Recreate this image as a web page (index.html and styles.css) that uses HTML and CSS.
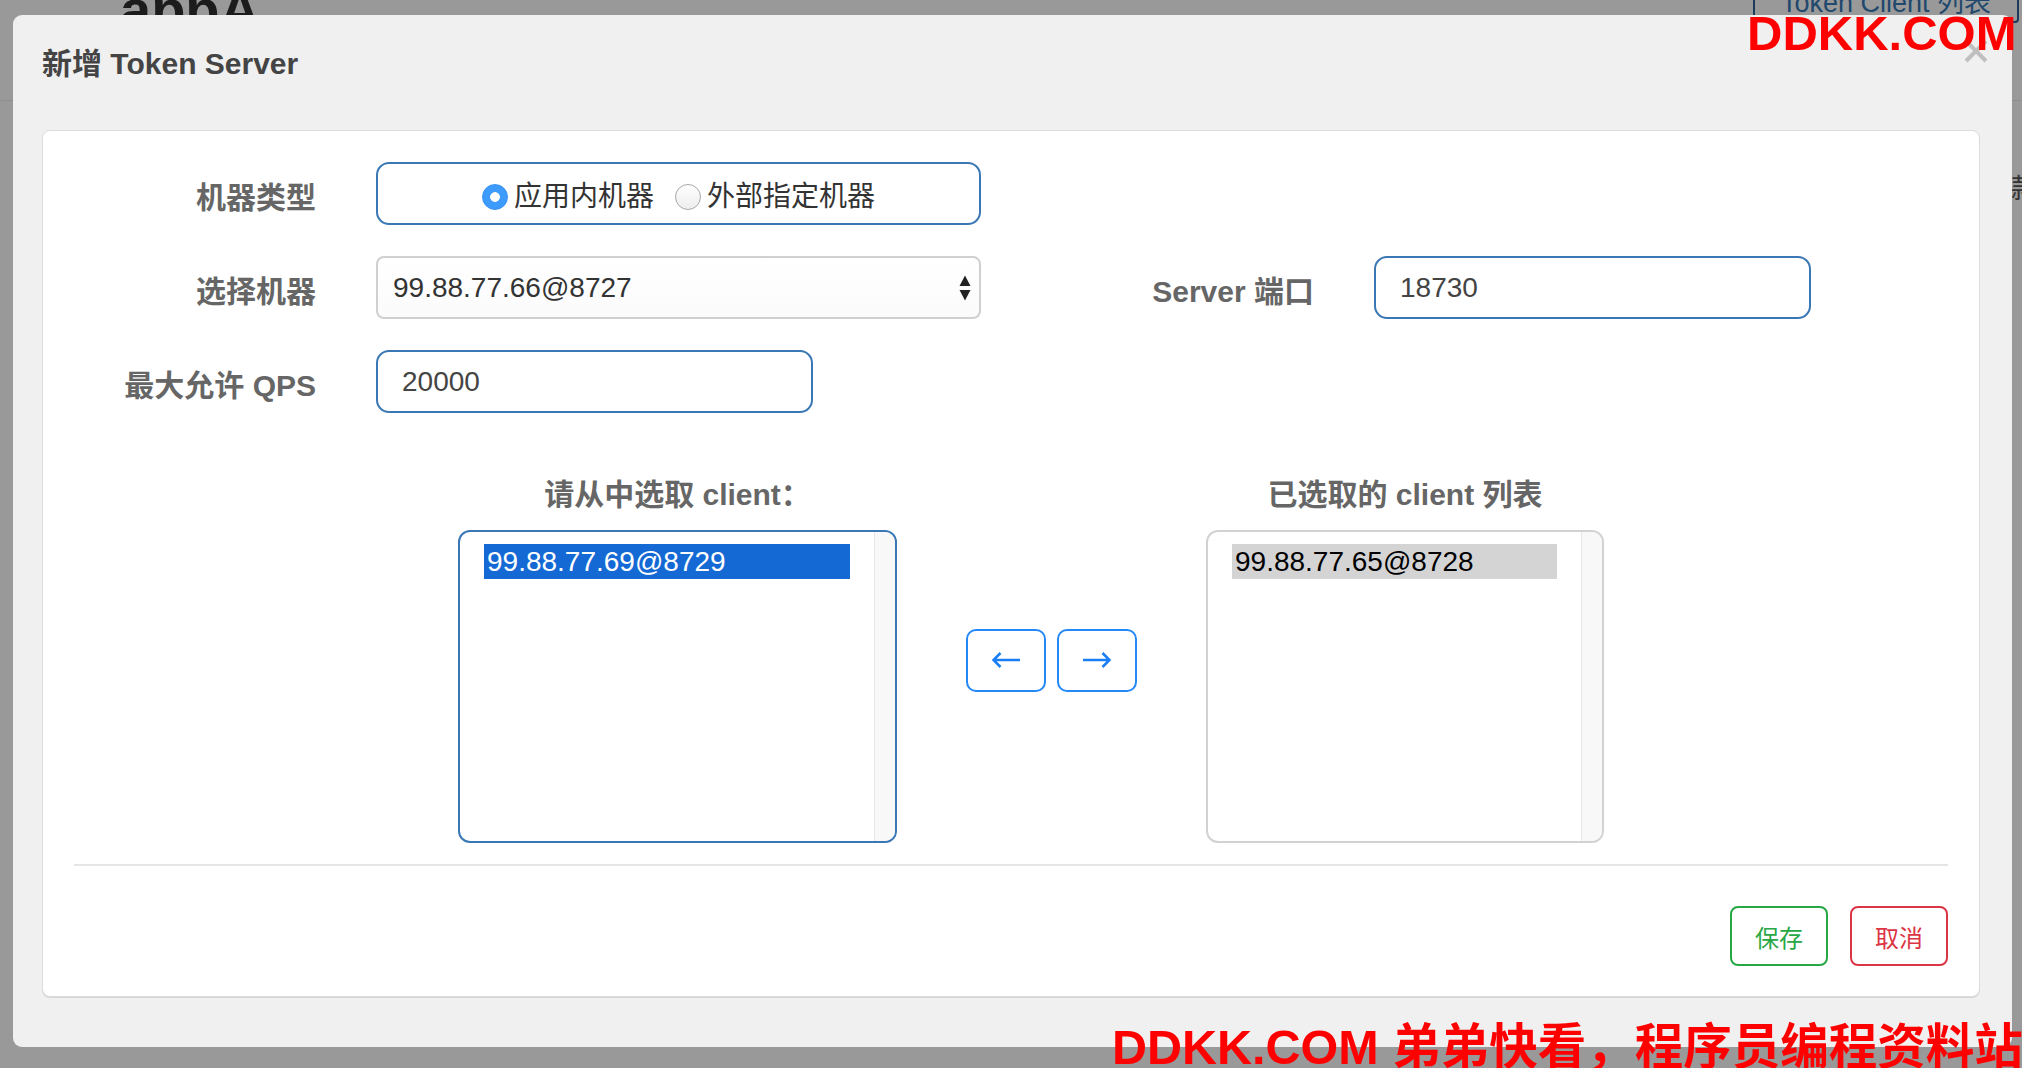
FILE: index.html
```html
<!DOCTYPE html>
<html lang="zh-CN">
<head>
<meta charset="utf-8">
<title>新增 Token Server</title>
<link rel="stylesheet" href="styles.css">
</head>
<body>
<div class="page">
  <div class="page-head">
    <div class="app-name">appA</div>
    <div class="token-client-btn">Token Client 列表</div>
  </div>
  <div class="page-row"><span class="page-tab">新款</span></div>
</div>

<div class="modal">
  <div class="modal-header">
    <h4 class="modal-title">新增 Token Server</h4>
    <button class="close" type="button" aria-label="close">
      <svg width="26" height="26" viewBox="0 0 26 26"><path d="M3 3 L23 23 M23 3 L3 23" stroke="#bfbfbf" stroke-width="4" fill="none"/></svg>
    </button>
  </div>

  <div class="panel">
    <div class="form-grid">
      <div class="lbl r1">机器类型</div>
      <div class="radio-box r1">
        <span class="radio on"></span><span class="radio-text">应用内机器</span>
        <span class="radio off"></span><span class="radio-text">外部指定机器</span>
      </div>

      <div class="lbl r2">选择机器</div>
      <div class="select r2">
        <span class="select-val">99.88.77.66@8727</span>
        <svg class="select-arrows" width="12" height="26" viewBox="0 0 12 26"><path d="M0.5 11 L6 0.5 L11.5 11 Z M0.5 15 L11.5 15 L6 25.5 Z" fill="#222"/></svg>
      </div>
      <div class="lbl r2 c3">Server 端口</div>
      <div class="input r2 c4">18730</div>

      <div class="lbl r3">最大允许 QPS</div>
      <div class="input r3 qps">20000</div>
    </div>

    <div class="transfer">
      <div class="list-col left">
        <div class="list-title">请从中选取 client：</div>
        <div class="listbox active">
          <div class="opts"><div class="opt sel">99.88.77.69@8729</div></div>
          <div class="track"></div>
        </div>
      </div>
      <div class="move-btns">
        <button class="move-btn" type="button">
          <svg width="30" height="18" viewBox="0 0 30 18"><path d="M29 9 H2.5 M9.5 2 L2.5 9 L9.5 16" stroke="#1a7ff5" stroke-width="2.5" fill="none"/></svg>
        </button>
        <button class="move-btn" type="button">
          <svg width="30" height="18" viewBox="0 0 30 18"><path d="M1 9 H27.5 M20.5 2 L27.5 9 L20.5 16" stroke="#1a7ff5" stroke-width="2.5" fill="none"/></svg>
        </button>
      </div>
      <div class="list-col right">
        <div class="list-title">已选取的 client 列表</div>
        <div class="listbox">
          <div class="opts"><div class="opt gray">99.88.77.65@8728</div></div>
          <div class="track"></div>
        </div>
      </div>
    </div>

    <div class="divider"></div>

    <div class="footer">
      <button class="btn btn-save" type="button">保存</button>
      <button class="btn btn-cancel" type="button">取消</button>
    </div>
  </div>
</div>

<div class="wm wm-top">DDKK.COM</div>
<div class="wm wm-bottom">DDKK.COM 弟弟快看，程序员编程资料站</div>
</body>
</html>
```

FILE: styles.css
```css
* { box-sizing: border-box; }

html, body {
  margin: 0;
  padding: 0;
}

body {
  width: 2022px;
  height: 1068px;
  overflow: hidden;
  position: relative;
  background: #999999;
  font-family: "Liberation Sans", "Noto Sans CJK SC", sans-serif;
}

/* underlying page (dimmed by the modal backdrop) */
.page {
  height: 100%;
}

.page-head {
  display: flex;
  justify-content: space-between;
  align-items: flex-start;
  height: 101px;
  border-bottom: 1px solid #8e8e8e;
}

.app-name {
  margin-left: 120px;
  margin-top: -18px;
  font-size: 56px;
  line-height: 56px;
  font-weight: 700;
  color: #1c1c1c;
}

.token-client-btn {
  margin-top: -17px;
  margin-right: 3px;
  padding: 0 26px;
  border: 2px solid #1d3b5a;
  border-radius: 4px;
  font-size: 27px;
  line-height: 36px;
  color: #21486d;
}

.page-row {
  display: flex;
  justify-content: flex-end;
  margin-top: 70px;
  margin-right: -16px;
}

.page-tab {
  font-size: 27px;
  line-height: 36px;
  color: #333;
}

/* modal */
.modal {
  position: absolute;
  left: 13px;
  top: 15px;
  width: 1999px;
  height: 1032px;
  background: #f0f0f0;
  border-radius: 9px;
  padding: 0 32px 50px 29px;
}

.modal-header {
  padding-top: 31px;
  margin-bottom: 48px;
}

.modal-title {
  margin: 0;
  font-size: 30px;
  line-height: 36px;
  font-weight: 700;
  color: #444;
}

.close {
  position: absolute;
  right: 23px;
  top: 23px;
  width: 26px;
  height: 26px;
  padding: 0;
  border: 0;
  background: transparent;
  display: flex;
}

.panel {
  background: #fff;
  border: 1px solid #dcdcdc;
  border-radius: 8px;
  box-shadow: 0 1px 0 #d6d6d6;
  padding: 31px 0 30px 0;
}

/* form */
.form-grid {
  display: grid;
  grid-template-columns: 273px 605px 273px 437px;
  grid-template-rows: 63px 63px 63px;
  column-gap: 60px;
  row-gap: 31px;
}

.r1 { grid-row: 1; }
.r2 { grid-row: 2; }
.r3 { grid-row: 3; }
.c3 { grid-column: 3; }
.c4 { grid-column: 4; }

.lbl {
  grid-column: 1;
  align-self: center;
  text-align: right;
  padding-top: 9px;
  font-size: 30px;
  line-height: 36px;
  font-weight: 700;
  color: #666;
  white-space: nowrap;
}

.lbl.c3 { grid-column: 3; }

.radio-box {
  grid-column: 2;
  display: flex;
  justify-content: center;
  align-items: center;
  padding-top: 7px;
  border: 2px solid #3a78b5;
  border-radius: 13px;
  font-size: 28px;
  color: #333;
}

.radio {
  width: 26px;
  height: 26px;
  border-radius: 50%;
  margin-right: 6px;
  flex: none;
}

.radio.on {
  background: radial-gradient(circle, #fff 0 4.5px, #3d9bfd 5.2px);
  border: 1px solid #3590f0;
}

.radio.off {
  margin-left: 21px;
  background: linear-gradient(#ffffff, #ededed);
  border: 1px solid #a8a8a8;
}

.radio-text {
  line-height: 36px;
}

.select {
  grid-column: 2;
  display: flex;
  align-items: center;
  justify-content: space-between;
  border: 2px solid #d0d0d0;
  border-radius: 8px;
  padding: 0 8px 0 15px;
  background: linear-gradient(#ffffff, #fbfbfb);
  font-size: 28px;
  color: #333;
}

.input {
  display: flex;
  align-items: center;
  border: 2px solid #3a78b5;
  border-radius: 13px;
  padding-left: 24px;
  font-size: 28px;
  color: #444;
  background: #fff;
}

.input.qps {
  grid-column: 2;
  width: 437px;
}

/* transfer lists */
.transfer {
  display: flex;
  align-items: center;
  margin-top: 64px;
  margin-left: 415px;
}

.list-col.left { width: 439px; }
.list-col.right { width: 398px; }

.list-title {
  text-align: center;
  font-size: 30px;
  line-height: 36px;
  font-weight: 700;
  color: #666;
  margin-bottom: 17px;
  white-space: nowrap;
}

.listbox {
  display: flex;
  height: 313px;
  border: 2px solid #d2d2d2;
  border-radius: 12px;
  overflow: hidden;
  background: #fff;
}

.listbox.active {
  border-color: #3a78b5;
}

.opts {
  flex: 1;
  padding: 12px 24px;
}

.opt {
  height: 35px;
  line-height: 35px;
  padding-left: 3px;
  font-size: 28px;
  white-space: nowrap;
}

.opt.sel {
  background: #1469d5;
  color: #fff;
}

.opt.gray {
  background: #d4d4d4;
  color: #000;
}

.track {
  width: 21px;
  flex: none;
  background: #f8f8f8;
  border-left: 1px solid #e6e6e6;
}

.move-btns {
  display: flex;
  gap: 11px;
  margin: 0 69px;
}

.move-btn {
  width: 80px;
  height: 63px;
  padding: 0;
  border: 2px solid #2588f7;
  border-radius: 10px;
  background: #fff;
  display: flex;
  align-items: center;
  justify-content: center;
}

.divider {
  height: 2px;
  background: #e5e5e5;
  margin: 21px 31px 0 31px;
}

.footer {
  display: flex;
  justify-content: flex-end;
  gap: 22px;
  margin-top: 40px;
  padding-right: 31px;
}

.btn {
  width: 98px;
  height: 60px;
  padding: 0;
  border: 2px solid;
  border-radius: 8px;
  background: #fff;
  font-family: "Liberation Sans", "Noto Sans CJK SC", sans-serif;
  font-size: 24px;
}

.btn-save {
  border-color: #28a745;
  color: #28a745;
}

.btn-cancel {
  border-color: #dc3545;
  color: #dc3545;
}

/* watermarks */
.wm {
  position: absolute;
  font-weight: 700;
  color: #ff0000;
  line-height: 1;
  white-space: nowrap;
}

.wm-top {
  left: 1747px;
  top: 9px;
  font-size: 49px;
}

.wm-bottom {
  left: 1112px;
  top: 1023px;
  font-size: 48.5px;
}
```
